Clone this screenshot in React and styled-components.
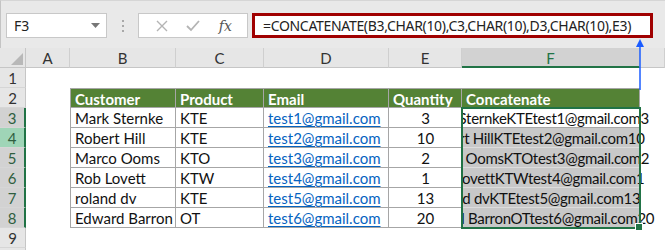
import React from "react";
import styled, { createGlobalStyle } from "styled-components";

const GlobalStyle = createGlobalStyle`
  html, body {
    margin: 0;
    padding: 0;
    background: #fff;
  }
  body {
    width: 665px;
    height: 250px;
    overflow: hidden;
  }
`;

const GREEN = "#217346";
const GRID = "#a6a6a6";
const COLS = ["", "A", "B", "C", "D", "E", "F", ""];

const rows = [
  ["Mark Sternke", "KTE", "test1@gmail.com", "3"],
  ["Robert Hill", "KTE", "test2@gmail.com", "10"],
  ["Marco Ooms", "KTO", "test3@gmail.com", "2"],
  ["Rob Lovett", "KTW", "test4@gmail.com", "1"],
  ["roland dv", "KTE", "test5@gmail.com", "13"],
  ["Edward Barron", "OT", "test6@gmail.com", "20"],
];

const Sheet = styled.div`
  position: relative;
  width: 665px;
  height: 250px;
  overflow: hidden;
  display: flex;
  flex-direction: column;
  font-family: Lato, "Liberation Sans", sans-serif;
`;

const Toolbar = styled.div`
  flex: none;
  height: 48px;
  box-sizing: border-box;
  background: #e9e9e9;
  border-top: 1px solid #d6d6d6;
  border-left: 1px solid #c4c4c4;
  display: flex;
  align-items: flex-start;
  padding: 12px 0 0 5px;
  font-family: "Noto Sans", "Open Sans", sans-serif;
  font-size: 14px;
  color: #222;
`;

const Box = styled.div`
  height: 25px;
  box-sizing: border-box;
  background: #fff;
  border: 1px solid #c8c8c8;
  display: flex;
  align-items: center;
`;

const NameBox = styled(Box)`
  width: 101px;
  justify-content: space-between;
  padding: 0 6px 0 7px;
`;

const Grip = styled.div`
  width: 31px;
  height: 25px;
  display: flex;
  align-items: center;
  justify-content: center;
`;

const FxBox = styled(Box)`
  width: 110px;
  justify-content: space-around;
  padding: 0 6px 0 8px;
`;

const FxLabel = styled.span`
  font-family: "DejaVu Serif", "Liberation Serif", serif;
  font-style: italic;
  font-size: 14px;
  color: #555;
`;

const Formula = styled(Box)`
  width: 401px;
  margin-left: 4px;
  border: 3px solid #a00000;
  padding-left: 8px;
  letter-spacing: -0.32px;
  white-space: nowrap;
`;

const Grid = styled.div`
  position: relative;
  flex: 1;
  display: grid;
  grid-template-columns: 26px 44px 106px 88px 125px 73px 178px 1fr;
  grid-auto-rows: 20px;
  font-size: 15px;
`;

const Corner = styled.div`
  background: #e6e6e6;
  border-right: 1px solid #c6c6c6;
  border-bottom: 1px solid #c6c6c6;
  display: flex;
  align-items: flex-end;
  justify-content: flex-end;
  padding: 0 2px 2px 0;
`;

const ColHead = styled.div`
  background: ${(p) => (p.$sel ? "#d2d2d2" : "#e6e6e6")};
  border-right: 1px solid #cfcfcf;
  border-bottom: ${(p) => (p.$sel ? `2px solid ${GREEN}` : "1px solid #c6c6c6")};
  color: ${(p) => (p.$sel ? GREEN : "#333")};
  display: flex;
  align-items: center;
  justify-content: center;
  padding-top: 1px;
`;

const RowHead = styled.div`
  background: ${(p) => (p.$active ? "#9fd5b7" : p.$sel ? "#d2d2d2" : "#e6e6e6")};
  border-right: ${(p) => (p.$sel ? `2px solid ${GREEN}` : "1px solid #c6c6c6")};
  border-bottom: 1px solid #d6d6d6;
  color: ${(p) => (p.$sel ? "#2f5f3f" : "#333")};
  display: flex;
  align-items: center;
  justify-content: center;
  padding-top: 1px;
`;

const Cell = styled.div`
  box-sizing: border-box;
  min-width: 0;
  display: flex;
  align-items: center;
  justify-content: ${(p) => p.$align || "flex-start"};
  padding: 1px 3px 0 4px;
  white-space: nowrap;
  overflow: hidden;
  color: #111;
  border-right: ${(p) => (p.$table ? `1px solid ${GRID}` : "none")};
  border-bottom: ${(p) => (p.$table ? `1px solid ${GRID}` : "none")};
  border-top: ${(p) => (p.$top ? `1px solid ${GRID}` : "none")};
  border-left: ${(p) => (p.$left ? `1px solid ${GRID}` : "none")};
  background: ${(p) => (p.$head ? "#548235" : "transparent")};
  ${(p) => p.$head && "color: #fff; font-weight: 700;"}
`;

const ConcatCell = styled(Cell)`
  overflow: visible;
  justify-content: center;
  padding: 1px 30px 0 0;
  letter-spacing: -0.3px;
  clip-path: inset(0 -40px 0 0);
  background: ${(p) => (p.$fill ? "#c8c8c8" : "#fff")};
  border-bottom: 1px solid ${(p) => (p.$fill ? "#dcdcdc" : GRID)};
`;

const Link = styled.span`
  color: #0563c1;
  text-decoration: underline;
  text-underline-offset: 2px;
`;

const Selection = styled.div`
  position: absolute;
  left: 461px;
  top: 59px;
  width: 180px;
  height: 122px;
  box-sizing: border-box;
  border: 2px solid ${GREEN};
  pointer-events: none;
`;

const Handle = styled.div`
  position: absolute;
  right: -4px;
  bottom: -4px;
  width: 6px;
  height: 6px;
  background: ${GREEN};
  border: 1px solid #fff;
`;

const Arrow = styled.svg`
  position: absolute;
  left: 635px;
  top: 38px;
`;

function Dots() {
  return (
    <svg width="4" height="12" viewBox="0 0 4 12">
      <rect x="1" y="0" width="2" height="2" fill="#a8a8a8" />
      <rect x="1" y="5" width="2" height="2" fill="#a8a8a8" />
      <rect x="1" y="10" width="2" height="2" fill="#a8a8a8" />
    </svg>
  );
}

const App = () => {
  const gridRows = [];
  for (let r = 1; r <= 10; r++) {
    const sel = r >= 3 && r <= 8;
    gridRows.push(
      <RowHead key={`h${r}`} $sel={sel} $active={r === 4}>
        {r}
      </RowHead>
    );
    gridRows.push(<Cell key={`a${r}`} />);
    if (r === 2) {
      ["Customer", "Product", "Email", "Quantity", "Concatenate"].forEach((t, i) => (
        gridRows.push(
          <Cell key={`t${i}`} $table $head $top $left={i === 0}>
            {t}
          </Cell>
        )
      ));
    } else if (sel) {
      const d = rows[r - 3];
      gridRows.push(
        <Cell key={`b${r}`} $table $left>
          {d[0]}
        </Cell>,
        <Cell key={`c${r}`} $table>
          {d[1]}
        </Cell>,
        <Cell key={`d${r}`} $table>
          <Link>{d[2]}</Link>
        </Cell>,
        <Cell key={`e${r}`} $table $align="center">
          {d[3]}
        </Cell>,
        <ConcatCell key={`f${r}`} $table $fill={r > 3}>
          {d.join("")}
        </ConcatCell>
      );
    } else {
      for (let c = 0; c < 5; c++) gridRows.push(<Cell key={`e${r}-${c}`} />);
    }
    gridRows.push(<Cell key={`g${r}`} />);
  }

  return (
    <Sheet>
      <GlobalStyle />
      <Toolbar>
        <NameBox>
          <span>F3</span>
          <svg width="9" height="5" viewBox="0 0 9 5">
            <path d="M0 0h9L4.5 5z" fill="#777" />
          </svg>
        </NameBox>
        <Grip>
          <Dots />
        </Grip>
        <FxBox>
          <svg width="12" height="12" viewBox="0 0 12 12">
            <path d="M1 1l10 10M11 1L1 11" stroke="#b4b4b4" strokeWidth="1.4" />
          </svg>
          <svg width="14" height="12" viewBox="0 0 14 12">
            <path d="M1 6l4 4 8-9" stroke="#b4b4b4" strokeWidth="1.8" fill="none" />
          </svg>
          <FxLabel>fx</FxLabel>
        </FxBox>
        <Formula>=CONCATENATE(B3,CHAR(10),C3,CHAR(10),D3,CHAR(10),E3)</Formula>
      </Toolbar>
      <Grid>
        {COLS.map((c, i) =>
          i === 0 ? (
            <Corner key="corner">
              <svg width="12" height="12" viewBox="0 0 12 12">
                <path d="M12 0v12H0z" fill="#b8b8b8" />
              </svg>
            </Corner>
          ) : (
            <ColHead key={`col${i}`} $sel={c === "F"}>
              {c}
            </ColHead>
          )
        )}
        {gridRows}
        <Selection>
          <Handle />
        </Selection>
      </Grid>
      <Arrow width="10" height="52" viewBox="0 0 10 52">
        <path d="M5 3v49" stroke="#1a5cff" strokeWidth="1.5" />
        <path d="M5 1L1 9h8z" fill="#1a5cff" />
      </Arrow>
    </Sheet>
  );
};

export default App;
